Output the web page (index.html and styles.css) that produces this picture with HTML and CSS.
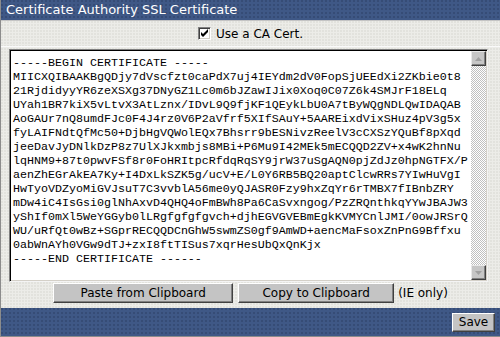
FILE: index.html
```html
<!DOCTYPE html>
<html lang="en">
<head>
    <meta charset="UTF-8">
    <title>Certificate Authority SSL Certificate</title>
    <link rel="stylesheet" href="styles.css">
</head>
<body>
    <div class="panel">
        <div class="panel-title">Certificate Authority SSL Certificate</div>

        <div class="panel-body">
            <div class="option-row">
                <span class="checkbox">
                    <svg width="9" height="9" viewBox="0 0 9 9"><path d="M1 3v3l2 2 5-5V0L3 5z" fill="#000"/></svg>
                </span>
                <span class="option-label">Use a CA Cert.</span>
            </div>

            <div class="cert-box">
                <textarea class="cert-text" spellcheck="false">
-----BEGIN CERTIFICATE -----
MIICXQIBAAKBgQDjy7dVscfzt0caPdX7uj4IEYdm2dV0FopSjUEEdXi2ZKbie0t8
21RjdidyyYR6zeXSXg37DNyGZ1Lc0m6bJZawIJix0Xoq0C07Z6k4SMJrF18ELq
UYah1BR7kiX5vLtvX3AtLznx/IDvL9Q9fjKF1QEykLbU0A7tByWQgNDLQwIDAQAB
AoGAUr7nQ8umdFJc0F4J4rz0V6P2aVfrf5XIfSAuY+5AAREixdVixSHuz4pV3g5x
fyLAIFNdtQfMc50+DjbHgVQWolEQx7Bhsrr9bESNivzReelV3cCXSzYQuBf8pXqd
jeeDavJyDNlkDzP8z7UlXJkxmbjs8MBi+P6Mu9I42MEk5mECQQD2ZV+x4wK2hnNu
lqHNM9+87t0pwvFSf8r0FoHRItpcRfdqRqSY9jrW37uSgAQN0pjZdJz0hpNGTFX/P
aenZhEGrAkEA7Ky+I4DxLkSZK5g/ucV+E/L0Y6RB5BQ20aptClcwRRs7YIwHuVgI
HwTyoVDZyoMiGVJsuT7C3vvblA56me0yQJASR0Fzy9hxZqYr6rTMBX7fIBnbZRY
mDw4iC4IsGsi0glNhAxvD4QHQ4oFmBWh8Pa6CaSvxngog/PzZRQnthkqYYwJBAJW3
yShIf0mXl5WeYGGyb0lLRgfgfgfgvch+djhEGVGVEBmEgkKVMYCnlJMI/0owJRSrQ
WU/uRfQt0wBz+SGprRECQQDCnGhW5swmZS0gf9AmWD+aencMaFsoxZnPnG9Bffxu
0abWnAYh0VGw9dTJ+zxI8ftTISus7xqrHesUbQxQnKjx
-----END CERTIFICATE ------</textarea>
                <div class="scrollbar">
                    <div class="sb-btn">
                        <svg width="7" height="4" viewBox="0 0 7 4"><path d="M3.5 0L7 4H0z" fill="#a0a0a0"/></svg>
                    </div>
                    <div class="sb-track"></div>
                    <div class="sb-btn">
                        <svg width="7" height="4" viewBox="0 0 7 4"><path d="M0 0h7L3.5 4z" fill="#a0a0a0"/></svg>
                    </div>
                </div>
            </div>

            <div class="clip-row">
                <button class="btn btn-paste">Paste from Clipboard</button>
                <button class="btn btn-copy">Copy to Clipboard</button>
                <span class="note">(IE only)</span>
            </div>
        </div>

        <div class="panel-footer">
            <button class="btn btn-save">Save</button>
        </div>
    </div>
</body>
</html>
```

FILE: styles.css
```css
body {
    margin: 0;
    padding: 0;
    font-family: "DejaVu Sans", Verdana, sans-serif;
    font-size: 12px;
    color: #000;
    background-color: #ececE8;
}

.panel {
    width: 500px;
    height: 337px;
    box-sizing: border-box;
    border-left: 1px solid #8c8c8c;
    border-bottom: 1px solid #8c8c8c;
    display: flex;
    flex-direction: column;
}

.panel-title {
    height: 20px;
    line-height: 20px;
    padding-left: 5px;
    font-size: 13px;
    color: #fff;
    background-color: #3f5886;
    background-image: radial-gradient(circle at 1px 1px, #364c76 1px, transparent 1px);
    background-size: 4px 4px;
    border-bottom: 1px solid #c4c4c4;
}

.panel-body {
    flex: 1;
    display: flex;
    flex-direction: column;
    background-color: #ececE8;
    background-image: radial-gradient(circle at 1px 1px, #e2e2dd 1px, transparent 1px);
    background-size: 3px 3px;
}

.option-row {
    height: 25px;
    display: flex;
    align-items: center;
    justify-content: center;
    gap: 5px;
    border-bottom: 1px solid #fafafa;
}

.checkbox {
    width: 13px;
    height: 13px;
    box-sizing: border-box;
    display: flex;
    align-items: center;
    justify-content: center;
    background: #fff;
    border: 1px solid;
    border-color: #808080 #fff #fff #808080;
    box-shadow: inset 1px 1px #404040, inset -1px -1px #d4d0c8;
}

.cert-box {
    height: 233px;
    box-sizing: border-box;
    margin: 2px 12px 0 8px;
    display: flex;
    background: #fff;
    border: 1px solid;
    border-color: #808080 #f4f4f4 #f4f4f4 #808080;
    box-shadow: inset 1px 1px #000, inset -1px -1px #d4d0c8;
    padding: 1px;
}

.cert-text {
    flex: 1;
    margin: 0;
    border: none;
    outline: none;
    resize: none;
    overflow: hidden;
    white-space: pre;
    padding: 5px 0 0 2px;
    font-family: "Liberation Mono", "Courier New", monospace;
    font-size: 11.67px;
    line-height: 14px;
    color: #000;
    background: #fff;
}

.scrollbar {
    width: 15px;
    display: flex;
    flex-direction: column;
}

.sb-btn {
    width: 15px;
    height: 15px;
    box-sizing: border-box;
    display: flex;
    align-items: center;
    justify-content: center;
    background: #c6c6c6;
    border: 1px solid;
    border-color: #e8e8e8 #404040 #404040 #e8e8e8;
    box-shadow: inset -1px -1px #808080;
}

.sb-track {
    flex: 1;
    background: repeating-conic-gradient(#c0c0c0 0 25%, #fff 0 50%) 0 0 / 2px 2px;
}

.clip-row {
    height: 20px;
    margin-top: 1px;
    display: flex;
    align-items: center;
    justify-content: center;
}

.btn {
    height: 20px;
    padding: 0;
    font-family: "DejaVu Sans", Verdana, sans-serif;
    font-size: 12px;
    color: #000;
    background: #c4c4c4;
    border: 1px solid;
    border-color: #fff #404040 #404040 #fff;
    box-shadow: inset -1px -1px #808080;
    cursor: pointer;
}

.btn-paste {
    width: 180px;
}

.btn-copy {
    width: 156px;
    margin-left: 5px;
}

.note {
    margin-left: 4px;
}

.panel-footer {
    height: 28px;
    display: flex;
    align-items: center;
    justify-content: flex-end;
    padding-right: 5px;
    background-color: #3f5886;
    background-image: radial-gradient(circle at 1px 1px, #364c76 1px, transparent 1px);
    background-size: 4px 4px;
}

.btn-save {
    width: 43px;
    height: 19px;
}
```
